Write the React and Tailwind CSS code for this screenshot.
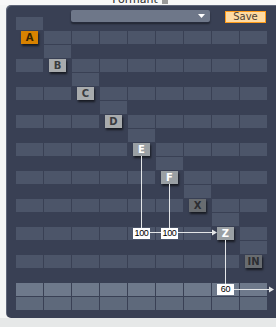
const NODES = ['A', 'B', 'C', 'D', 'E', 'F', 'X', 'Z', 'IN']

const NODE_STYLE = {
  A: 'bg-[#d88200] text-[#3a2400]',
  B: 'bg-[#a8abad] text-[#3a3c3f]',
  C: 'bg-[#a8abad] text-[#3a3c3f]',
  D: 'bg-[#a8abad] text-[#3a3c3f]',
  E: 'bg-[#9aa0a4] text-white',
  F: 'bg-[#9aa0a4] text-white',
  X: 'bg-[#686c70] text-[#2c2e32]',
  Z: 'bg-[#9aa0a4] text-white',
  IN: 'bg-[#686c70] text-[#2c2e32]',
}

// send amounts shown on the matrix: [row, col] -> value
const SENDS = { '15-4': '100', '15-5': '100', '19-7': '60' }

function NodeButton({ name }) {
  return (
    <div
      className={`w-[17px] h-[13px] flex items-center justify-center text-[10px] font-bold leading-none shadow-[1px_2px_2px_rgba(0,0,0,0.6)] ${NODE_STYLE[name]}`}
    >
      {name}
    </div>
  )
}

function Amount({ value }) {
  return (
    <div className="w-[17px] h-[11px] bg-white text-black text-[9px] leading-none flex items-center justify-center tracking-[-0.3px] font-['Liberation_Sans',sans-serif]">
      {value}
    </div>
  )
}

function Cell({ row, col }) {
  const label = SENDS[`${row}-${col}`]

  if (row < 18) {
    const i = Math.floor(row / 2)
    if (row % 2 === 0) {
      return <div className={col === i ? 'bg-[#4c5569]' : ''} />
    }
    if (col === i) {
      return (
        <div className="flex items-center justify-center">
          <NodeButton name={NODES[i]} />
        </div>
      )
    }
    return (
      <div className="bg-[#4c5569] flex items-center justify-center">
        {label && <Amount value={label} />}
      </div>
    )
  }

  if (row === 18) return <div />

  return (
    <div
      className={`flex items-center justify-center ${row === 19 ? 'bg-[#6e798b]' : 'bg-[#5e697b]'}`}
    >
      {label && <Amount value={label} />}
    </div>
  )
}

function Wires() {
  const line = '#e4e6e8'
  return (
    <svg
      className="absolute left-0 top-0 overflow-visible pointer-events-none"
      width="251"
      height="293"
    >
      <g stroke={line} strokeWidth="1" fill="none">
        <line x1="125.5" y1="139" x2="125.5" y2="211" />
        <line x1="153.5" y1="167" x2="153.5" y2="211" />
        <line x1="134" y1="215.5" x2="145" y2="215.5" />
        <line x1="162" y1="215.5" x2="197" y2="215.5" />
        <line x1="209.5" y1="223" x2="209.5" y2="267" />
        <line x1="218" y1="272.5" x2="254" y2="272.5" />
      </g>
      <polygon points="201,215.5 196,212.5 196,218.5" fill={line} />
      <polygon points="258,272.5 253,269.5 253,275.5" fill={line} />
    </svg>
  )
}

export default function App() {
  const rows = Array.from({ length: 21 }, (_, r) => r)
  const cols = Array.from({ length: 9 }, (_, c) => c)

  return (
    <div className="w-[276px] h-[327px] overflow-hidden bg-[#e6e8e8] font-['DejaVu_Sans',sans-serif]">
      <div className="h-[5px] bg-[#f8f8f8] overflow-hidden flex justify-center">
        <div className="-mt-[6px] flex items-center gap-[4px] text-[11px] leading-[11px] text-[#2a2a2a] pl-[4px]">
          <span>Formant</span>
          <span className="w-[6px] h-[6px] bg-[#9a9a9a] mt-[3px]" />
        </div>
      </div>

      <div className="flex bg-[#f4f5f5]">
        <div className="relative ml-[6px] w-[270px] h-[313px] rounded-l-[5px] bg-[#3c4358] bg-[radial-gradient(rgba(0,0,0,0.1)_0.6px,transparent_0.8px)] bg-[length:2px_2px] shadow-[inset_1px_1px_0_#5f6679] pt-[12px] pl-[10px]">
          <div className="absolute left-[65px] top-[5px] w-[139px] h-[12px] rounded-[2px] bg-[#6e7789] shadow-[0_1px_0_#262b3b,0_2px_2px_rgba(0,0,0,0.45)] flex items-center justify-end pr-[5px]">
            <svg width="7" height="4" viewBox="0 0 7 4">
              <polygon points="0,0 7,0 3.5,4" fill="#ffffff" />
            </svg>
          </div>
          <button className="absolute left-[219px] top-[6px] w-[41px] h-[12px] bg-[#ffdba3] border border-[#ff9c1a] text-[#4e4233] text-[10px] leading-none flex items-center justify-center">
            Save
          </button>

          <div className="relative grid grid-cols-[repeat(9,27px)] grid-rows-[repeat(21,13px)] gap-[1px]">
            {rows.map((r) =>
              cols.map((c) => <Cell key={`${r}-${c}`} row={r} col={c} />)
            )}
            <Wires />
          </div>
        </div>
      </div>
    </div>
  )
}
